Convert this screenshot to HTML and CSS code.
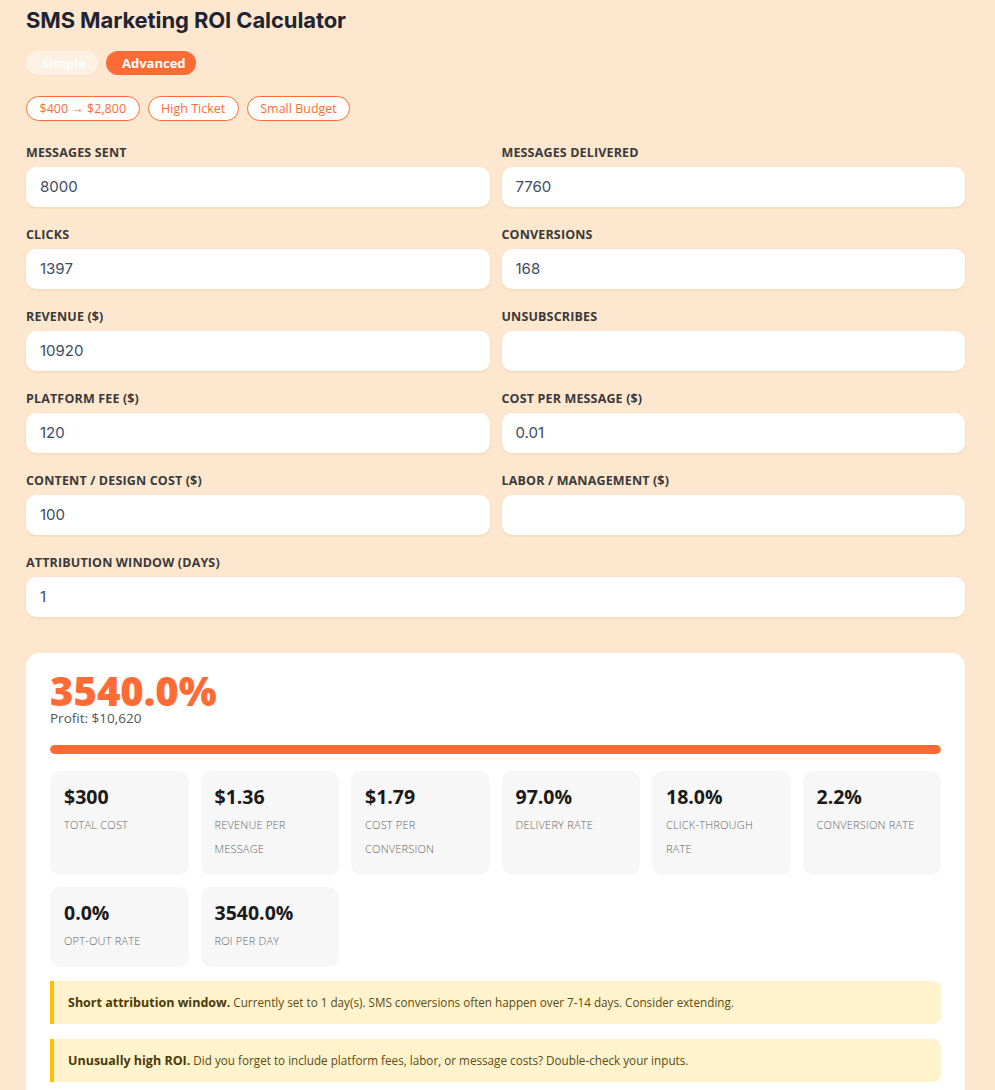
FILE: index.html
```html
<!DOCTYPE html>
<html lang="en">
<head>
<meta charset="utf-8">
<title>SMS Marketing ROI Calculator</title>
<link rel="stylesheet" href="styles.css">
</head>
<body>
<div class="page">
  <h1 class="title">SMS Marketing ROI Calculator</h1>
  <div class="modes">
    <button class="mode mode-off">Simple</button>
    <button class="mode mode-on">Advanced</button>
  </div>
  <div class="presets">
    <button class="preset">$400 → $2,800</button>
    <button class="preset">High Ticket</button>
    <button class="preset">Small Budget</button>
  </div>
  <div class="form">
    <div class="field"><label>Messages Sent</label><div class="input">8000</div></div>
    <div class="field"><label>Messages Delivered</label><div class="input">7760</div></div>
    <div class="field"><label>Clicks</label><div class="input">1397</div></div>
    <div class="field"><label>Conversions</label><div class="input">168</div></div>
    <div class="field"><label>Revenue ($)</label><div class="input">10920</div></div>
    <div class="field"><label>Unsubscribes</label><div class="input"></div></div>
    <div class="field"><label>Platform Fee ($)</label><div class="input">120</div></div>
    <div class="field"><label>Cost per Message ($)</label><div class="input">0.01</div></div>
    <div class="field"><label>Content / Design Cost ($)</label><div class="input">100</div></div>
    <div class="field"><label>Labor / Management ($)</label><div class="input"></div></div>
    <div class="field wide"><label>Attribution Window (days)</label><div class="input">1</div></div>
  </div>
  <div class="result">
    <div class="roi">3540.0%</div>
    <div class="profit">Profit: $10,620</div>
    <div class="bar"><div class="bar-fill" style="width:100%"></div></div>
    <div class="stats">
      <div class="stat"><div class="stat-value">$300</div><div class="stat-label">Total Cost</div></div>
      <div class="stat"><div class="stat-value">$1.36</div><div class="stat-label">Revenue per Message</div></div>
      <div class="stat"><div class="stat-value">$1.79</div><div class="stat-label">Cost per Conversion</div></div>
      <div class="stat"><div class="stat-value">97.0%</div><div class="stat-label">Delivery Rate</div></div>
      <div class="stat"><div class="stat-value">18.0%</div><div class="stat-label">Click-Through Rate</div></div>
      <div class="stat"><div class="stat-value">2.2%</div><div class="stat-label">Conversion Rate</div></div>
      <div class="stat"><div class="stat-value">0.0%</div><div class="stat-label">Opt-Out Rate</div></div>
      <div class="stat"><div class="stat-value">3540.0%</div><div class="stat-label">ROI per Day</div></div>
    </div>
    <div class="warn"><strong>Short attribution window.</strong> Currently set to 1 day(s). SMS conversions often happen over 7-14 days. Consider extending.</div>
    <div class="warn"><strong>Unusually high ROI.</strong> Did you forget to include platform fees, labor, or message costs? Double-check your inputs.</div>
  </div>
</div>
</body>
</html>
```

FILE: styles.css
```css
* { box-sizing: border-box; }
html, body {
  margin: 0;
  background: #fde8cf;
}
body {
  font-family: "Open Sans", "Liberation Sans", sans-serif;
  color: #222;
}
.page {
  padding: 4px 30px 0 26px;
}
.title {
  font-family: Inter, "Open Sans", sans-serif;
  font-size: 22px;
  font-weight: 700;
  letter-spacing: -0.1px;
  color: #1f2430;
  margin: 0;
  line-height: 32px;
}
.modes {
  display: flex;
  gap: 8px;
  margin-top: 15px;
}
.mode {
  font-family: "Open Sans", sans-serif;
  font-size: 13px;
  font-weight: 700;
  height: 24px;
  border: none;
  border-radius: 12px;
  padding: 0 16px;
  color: #fff;
  cursor: pointer;
}
.mode-off {
  background: #fdf1e4;
  width: 72px;
  box-shadow: 0 1px 2px rgba(0,0,0,0.04);
}
.mode-on {
  background: #ff6b35;
  width: 90px;
}
.presets {
  display: flex;
  gap: 8px;
  margin-top: 21px;
}
.preset {
  font-family: "Open Sans", sans-serif;
  font-size: 12.5px;
  height: 25px;
  background: #fff;
  border: 1px solid #ff6b35;
  color: #ff6b35;
  border-radius: 13px;
  padding: 0 12.5px;
}
.form {
  display: grid;
  grid-template-columns: 1fr 1fr;
  column-gap: 12px;
  row-gap: 19px;
  margin-top: 23px;
}
.field.wide { grid-column: 1 / -1; }
.field label {
  display: block;
  font-size: 12.5px;
  font-weight: 700;
  letter-spacing: 0.15px;
  text-transform: uppercase;
  color: #3a3a3a;
  line-height: 18px;
  margin-bottom: 5px;
}
.input {
  height: 40px;
  background: #fff;
  border-radius: 10px;
  box-shadow: 0 1px 3px rgba(180,120,60,0.18);
  font-family: Inter, "Open Sans", sans-serif;
  font-size: 15px;
  color: #3e4c62;
  line-height: 40px;
  padding: 0 14px;
}
.result {
  margin-top: 36px;
  background: #fff;
  border-radius: 14px;
  padding: 19px 24px 24px;
}
.roi {
  font-family: "Open Sans", sans-serif;
  font-size: 40px;
  font-weight: 800;
  color: #ff6b35;
  line-height: 38px;
}
.profit {
  font-size: 13.5px;
  color: #555;
  line-height: 16px;
}
.bar {
  margin-top: 19px;
  height: 9px;
  border-radius: 5px;
  background: #eee;
  overflow: hidden;
}
.bar-fill {
  height: 100%;
  background: #ff6b35;
  border-radius: 5px;
}
.stats {
  display: grid;
  grid-template-columns: repeat(6, 1fr);
  gap: 12px;
  margin-top: 17px;
}
.stat {
  background: #f7f7f7;
  border-radius: 10px;
  padding: 14px 14px 14px;
}
.stat-value {
  font-size: 19.5px;
  font-weight: 700;
  color: #1a1a1a;
  line-height: 24px;
}
.stat-label {
  margin-top: 4px;
  font-size: 11px;
  font-weight: 300;
  text-transform: uppercase;
  color: #666;
  line-height: 24px;
  letter-spacing: 0.2px;
}
.warn {
  margin-top: 14px;
  background: #fff3cd;
  border-left: 4px solid #ffc107;
  border-radius: 0 8px 8px 0;
  padding: 12px 14px;
  font-size: 11.7px;
  line-height: 19px;
  color: #5c4a10;
}
.warn + .warn { margin-top: 15px; }
.warn strong { font-weight: 700; font-size: 12.5px; color: #4a3a05; }
```
